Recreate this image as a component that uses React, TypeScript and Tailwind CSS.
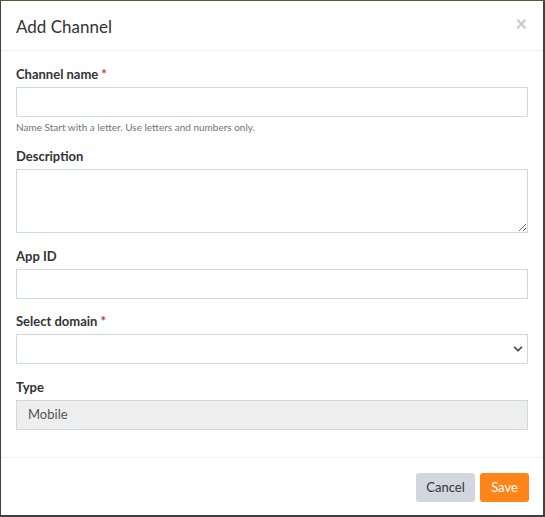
import { ChevronDown } from "lucide-react";

function Label({ text, required }: { text: string; required?: boolean }) {
  return (
    <label className="block h-[16px] text-[13px] leading-[16px] font-bold text-[#333] mb-[5px]">
      {text}
      {required && <span className="text-[#a94442] ml-[3px]">*</span>}
    </label>
  );
}

export default function App() {
  return (
    <div
      className="w-[545px] h-[517px] bg-[#404040] border-t border-[#5b5439] pl-[1px] pr-[2px] pb-[2px] overflow-hidden"
      style={{ fontFamily: "Lato, 'Open Sans', sans-serif" }}
    >
      <div className="bg-white h-full flex flex-col">
        <div className="h-[50px] border-b border-[#f0f0f0] flex items-center justify-between px-[15px]">
          <h4 className="text-[17px] text-[#333] pt-[2px]">Add Channel</h4>
          <span className="text-[20px] leading-none text-[#c8c8c8] font-bold -mt-[5px] mr-[1px]">×</span>
        </div>

        <div className="px-[15px] pt-[15px] pb-[27px]">
          <Label text="Channel name" required />
          <input className="block w-full h-[30px] border border-[#d2d6de] outline-none" />
          <p className="text-[10px] text-[#737373] leading-[14px] mt-[3px] mb-[14px]">
            Name Start with a letter. Use letters and numbers only.
          </p>

          <Label text="Description" />
          <textarea className="block w-full h-[64px] border border-[#d2d6de] outline-none mb-[15px]" />

          <Label text="App ID" />
          <input className="block w-full h-[30px] border border-[#d2d6de] outline-none mb-[14px]" />

          <Label text="Select domain" required />
          <div className="relative h-[30px] border border-[#d2d6de] mb-[15px]">
            <ChevronDown
              size={14}
              strokeWidth={3}
              className="absolute right-[2px] top-[7px] text-[#444]"
            />
          </div>

          <Label text="Type" />
          <div className="h-[30px] border border-[#d2d6de] bg-[#eeeeee] flex items-center px-[11px] text-[13px] text-[#555]">
            Mobile
          </div>
        </div>

        <div className="border-t border-[#f0f0f0] flex justify-end gap-[5px] px-[14px] pt-[15px]">
          <button className="h-[29px] w-[59px] rounded-[3px] bg-[#d2d6de] text-[13px] text-[#333]">
            Cancel
          </button>
          <button className="h-[29px] w-[49px] rounded-[3px] bg-[#ff851b] text-[13px] text-white">
            Save
          </button>
        </div>
      </div>
    </div>
  );
}
